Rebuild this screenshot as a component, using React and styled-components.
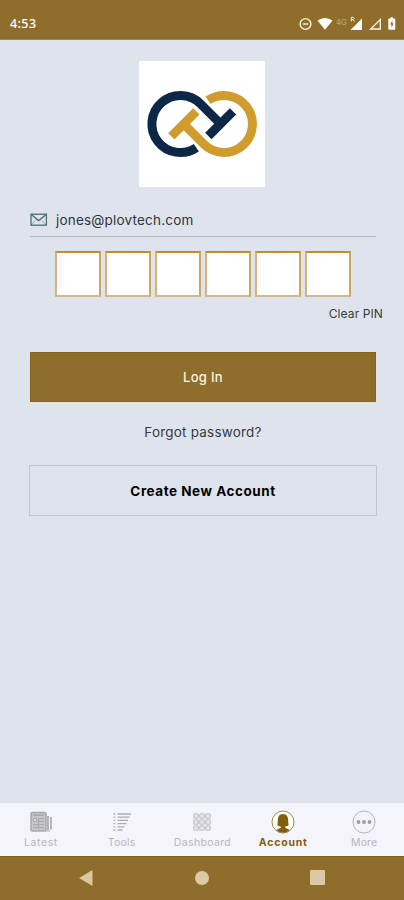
import React from 'react';
import styled, { createGlobalStyle } from 'styled-components';

const GlobalStyle = createGlobalStyle`
  * {
    box-sizing: border-box;
  }

  body {
    margin: 0;
    font-family: Inter, 'Open Sans', sans-serif;
    background: #dfe4ec;
  }
`;

const StatusIcons = () => (
  <svg width="100" height="18" viewBox="298 15 100 18">
    <g fill="none" stroke="#fbf3e4" strokeWidth="1.4">
      <circle cx="305.5" cy="24" r="5.4" />
      <path d="M302.8 24h5.4" />
      <path d="M380.3 19.6v9.4h-9.6z" />
    </g>
    <g fill="#fff">
      <path d="M317.5 20.5Q325 15.5 332.5 20.5L325 29.8z" />
      <path d="M362 18.5V30H350.5z" />
      <path d="M389.5 18.5h1v-1.2h2.6v1.2h1.2q1 0 1 1v9.2q0 1-1 1h-5q-1 0-1-1v-9.2q0-1 1.2-1z" />
    </g>
    <path d="M351.3 21.5v-4.2h2q1.4 1.2 0 2.3h-2M353 19.6l1.4 1.9" stroke="#f3e8d2" fill="none" />
    <path d="M392.4 20.4l-2.3 4h1.4v3.2l2.2-4.2h-1.3z" fill="#8e6e2a" />
    <text x="336" y="24.5" fontSize="8" fill="#bba67c" textLength="11">4G</text>
  </svg>
);

const LogoMark = () => (
  <svg width="126" height="126" viewBox="28 19 378 378" fill="none" strokeWidth="27">
    <g stroke="#0d2747">
      <path d="M200 279A85.5 85.5 0 1 1 212.5 147.5L272 207" />
      <path d="M236 244L310 170" />
    </g>
    <g stroke="#d09c2d">
      <path d="M235 137A85.5 85.5 0 1 1 222.5 268.5L163 209" />
      <path d="M125 245L200 170" />
    </g>
  </svg>
);

const MailIcon = () => (
  <svg width="18" height="14" viewBox="0 0 18 14" fill="none" stroke="#46716f" strokeWidth="1.3">
    <rect x="1" y="1.2" width="15.4" height="11" />
    <path d="M1.2 1.5L8.7 7.6L16.2 1.5" />
    <path d="M1.2 12L5.5 7.5M16.2 12L11.9 7.5" strokeWidth="0.5" />
  </svg>
);

const NewsIcon = () => (
  <svg width="24" height="24" viewBox="0 0 24 24" fill="none" stroke="#a9a9ad">
    <rect x="2" y="2.5" width="15" height="18.5" rx="1.5" fill="#c6c6ca" strokeWidth="1.5" />
    <path d="M4 5.2h11" strokeWidth="1.6" />
    <path d="M4.5 8.5h3v3h-3z" fill="#dcdce0" />
    <path d="M10 8.5h5M10 11.5h5M4 14.5h11M4 17.5h11M9.5 8v11" />
    <path d="M19 6v14M22 7v12.5" strokeWidth="1.7" />
    <path d="M17 21h4" />
  </svg>
);

const ToolsIcon = () => (
  <svg width="24" height="24" viewBox="0 0 24 24" fill="none" stroke="#aaaaae" strokeWidth="1.3">
    <path d="M3.5 4h1.8M3.5 7.2h1.8M3.5 10.4h1.8M3.5 13.6h1.8M3.5 16.8h1.8M3.5 20h1.8" />
    <path d="M7.5 4H21M7.5 7.2H19.5M7.5 10.4H18M7.5 13.6H16.5M7.5 16.8H14.5M7.5 20H12.5" />
  </svg>
);

const DashboardIcon = () => (
  <svg width="24" height="24" viewBox="0 0 24 24" fill="#e4e4e9" stroke="#c0c0c5" strokeWidth="1.1">
    {[6, 12, 18].map((y) =>
      [6, 12, 18].map((x) => (
        <rect key={`${x}-${y}`} x={x - 2.3} y={y - 2.3} width="4.6" height="4.6" rx="1.3" />
      ))
    )}
  </svg>
);

const AccountIcon = () => (
  <svg width="24" height="24" viewBox="0 0 24 24">
    <circle cx="12" cy="12" r="11" fill="#fff" stroke="#a4884b" strokeWidth="1" />
    <path
      d="M12 4C8.2 4 6.9 6.8 6.8 10.2C6.8 12.5 6.4 14 6.4 15.6Q8 16.6 9.8 16.4V17.8L5.2 19.9Q8.2 22.8 12 22.8T18.8 19.9L14.2 17.8V16.4Q16 16.6 17.6 15.6C17.6 14 17.2 12.5 17.2 10.2C17.1 6.8 15.8 4 12 4z"
      fill="#80600f"
    />
  </svg>
);

const MoreIcon = () => (
  <svg width="24" height="24" viewBox="0 0 24 24">
    <circle cx="12" cy="12" r="11" fill="none" stroke="#b4b4b9" strokeWidth="1" />
    <g fill="#9c9ca4">
      <circle cx="6.5" cy="12" r="1.9" />
      <circle cx="12" cy="12" r="1.9" />
      <circle cx="17.5" cy="12" r="1.9" />
    </g>
  </svg>
);

const tabs = [
  { label: 'Latest', icon: <NewsIcon />, spacing: '0.6px' },
  { label: 'Tools', icon: <ToolsIcon />, spacing: '0.25px' },
  { label: 'Dashboard', icon: <DashboardIcon />, spacing: '0.35px' },
  { label: 'Account', icon: <AccountIcon />, spacing: '0.8px', active: true },
  { label: 'More', icon: <MoreIcon />, spacing: '0.1px' },
];

const App = () => (
  <Screen>
    <GlobalStyle />
    <StatusBar>
      <Clock>4:53</Clock>
      <StatusIcons />
    </StatusBar>
    <Content>
      <Logo>
        <LogoMark />
      </Logo>
      <EmailField>
        <MailIcon />
        <span>jones@plovtech.com</span>
      </EmailField>
      <PinRow>
        {Array.from({ length: 6 }, (_, i) => (
          <PinBox key={i} />
        ))}
      </PinRow>
      <ClearPin>Clear PIN</ClearPin>
      <LoginButton>Log In</LoginButton>
      <ForgotLink>Forgot password?</ForgotLink>
      <CreateButton>Create New Account</CreateButton>
    </Content>
    <TabBar>
      {tabs.map((tab) => (
        <Tab key={tab.label} $active={tab.active} $spacing={tab.spacing}>
          {tab.icon}
          <span>{tab.label}</span>
        </Tab>
      ))}
    </TabBar>
    <SystemNav>
      <svg width="14" height="16" viewBox="0 0 14 16">
        <path d="M0 8L13.5 0v16z" fill="#d9c8a0" />
      </svg>
      <svg width="14" height="14" viewBox="0 0 14 14">
        <circle cx="7" cy="7" r="7" fill="#dcc9a5" />
      </svg>
      <svg width="15" height="15" viewBox="0 0 15 15">
        <rect width="15" height="15" rx="1" fill="#dac9a7" />
      </svg>
    </SystemNav>
  </Screen>
);

const Screen = styled.div`
  display: flex;
  flex-direction: column;
  width: 404px;
  height: 900px;
  overflow: hidden;
  background: #dfe4ec;
`;

const StatusBar = styled.header`
  display: flex;
  align-items: center;
  justify-content: space-between;
  height: 40px;
  padding: 8px 6px 0 10px;
  background: #8e6e2a;
  border-bottom: 1px solid #a08445;
`;

const Clock = styled.span`
  font-family: 'Noto Sans', sans-serif;
  font-size: 12.5px;
  font-weight: 500;
  letter-spacing: 0.4px;
  color: #fff;
`;

const Content = styled.main`
  flex: 1;
  display: flex;
  flex-direction: column;
  align-items: center;
  padding: 21px 28px 0 30px;
`;

const Logo = styled.div`
  display: flex;
  width: 126px;
  height: 126px;
  margin-right: 2px;
  background: #fff;
`;

const EmailField = styled.div`
  display: flex;
  align-items: center;
  gap: 8px;
  width: 346px;
  height: 34px;
  margin-top: 16px;
  border-bottom: 1px solid #b3b7bf;
  font-size: 13.5px;
  letter-spacing: 0.2px;
  color: #30343d;
`;

const PinRow = styled.div`
  display: flex;
  gap: 4px;
  margin-top: 14px;
`;

const PinBox = styled.div`
  width: 46px;
  height: 46px;
  background: #fff;
  border: 2px solid #cda65a;
  border-top-color: #bd8f2c;
  border-bottom-color: #d5b98e;
  border-left-color: #d4b47c;
`;

const ClearPin = styled.button`
  align-self: flex-end;
  height: 18px;
  margin: 7px -7px 0 0;
  padding: 0;
  border: 0;
  background: none;
  font: 12px Inter, sans-serif;
  letter-spacing: 0.1px;
  color: #363a42;
`;

const LoginButton = styled.button`
  width: 346px;
  height: 50px;
  margin-top: 30px;
  border: 1px solid #866419;
  background: #8e6e2a;
  font: 500 13px Inter, sans-serif;
  letter-spacing: 0.3px;
  color: #fbf3e4;
`;

const ForgotLink = styled.a`
  margin-top: 21px;
  font-size: 13.5px;
  line-height: 18px;
  letter-spacing: 0.2px;
  color: #363a42;
`;

const CreateButton = styled.button`
  width: 348px;
  height: 51px;
  margin-top: 24px;
  border: 1px solid #c3c5cd;
  background: transparent;
  font: 700 13.5px Inter, sans-serif;
  letter-spacing: 0.53px;
  color: #000;
`;

const TabBar = styled.nav`
  display: grid;
  grid-template-columns: repeat(5, 1fr);
  height: 53px;
  background: #f5f4fc;
`;

const Tab = styled.div`
  display: flex;
  flex-direction: column;
  align-items: center;
  gap: 1px;
  padding: 7px 0 0 1px;
  font-size: 10.5px;
  line-height: 16px;
  letter-spacing: ${({ $spacing }) => $spacing};
  font-weight: ${({ $active }) => ($active ? 700 : 400)};
  color: ${({ $active }) => ($active ? '#80600f' : '#b7b7bd')};
`;

const SystemNav = styled.footer`
  display: flex;
  align-items: center;
  justify-content: space-between;
  height: 44px;
  padding: 0 79px 2px 79px;
  background: #8e6e2a;
  border-top: 1px solid #806010;
`;

export default App;
